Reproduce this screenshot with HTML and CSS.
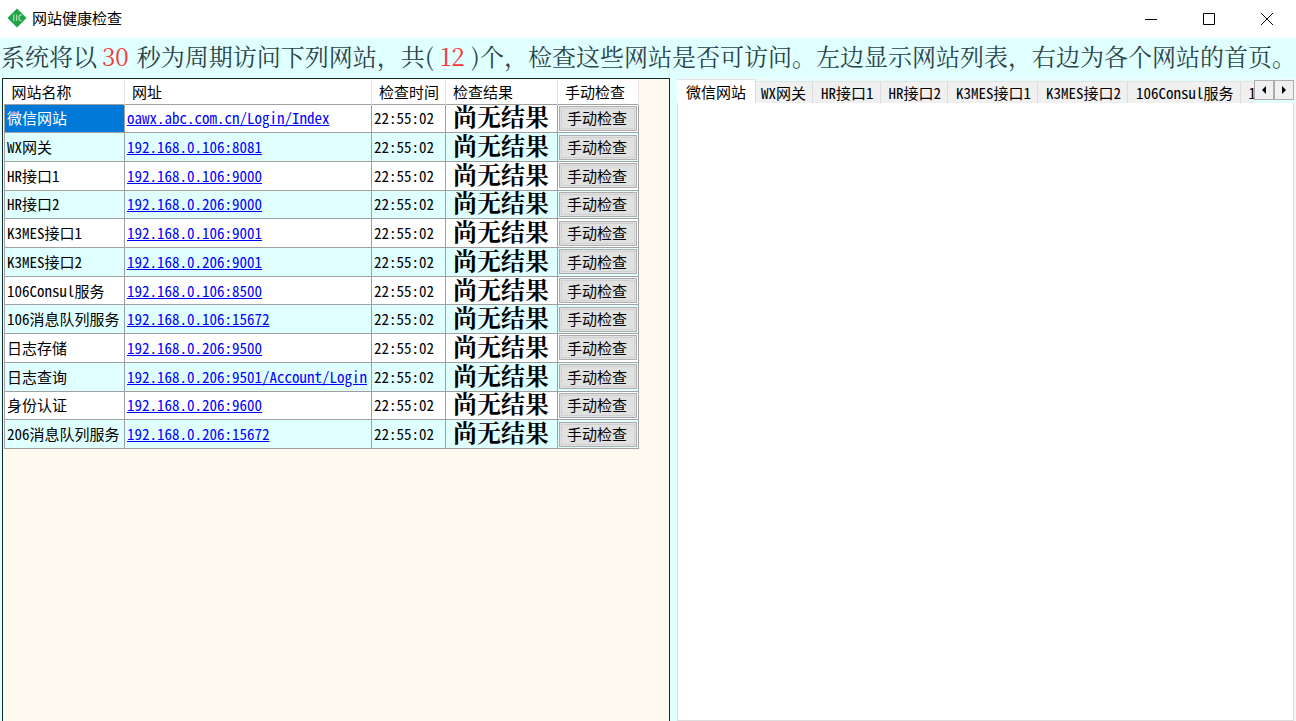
FILE: index.html
```html
<!DOCTYPE html>
<html lang="zh-CN">
<head>
<meta charset="utf-8">
<title>网站健康检查</title>
<link rel="stylesheet" href="styles.css">
</head>
<body>
<div class="window">
  <header class="titlebar">
    <svg class="logo" viewBox="0 0 20 20" aria-hidden="true">
      <path d="M10 0.5 19.5 10 10 19.5 0.5 10Z" fill="#1fa548"/>
      <path d="M6.8 6.5V13M9.6 6.5V13M14.6 7.4C12.6 6.2 12 8 12 9.8S12.8 13.2 14.6 12.2" fill="none" stroke="#a8dcae" stroke-width="1.3"/>
    </svg>
    <h1 class="title">网站健康检查</h1>
    <div class="controls">
      <button class="control" aria-label="最小化"><svg viewBox="0 0 14 14"><path d="M1 7.5H13"/></svg></button>
      <button class="control" aria-label="最大化"><svg viewBox="0 0 14 14"><path d="M1.5 1.5H12.5V12.5H1.5Z"/></svg></button>
      <button class="control" aria-label="关闭"><svg viewBox="0 0 14 14"><path d="M1 1 13 13M13 1 1 13"/></svg></button>
    </div>
  </header>
  <p class="notice"><span>系统将以</span><span class="num period">30</span><span>秒为周期访问下列网站，共</span><span class="paren">(</span><span class="num">12</span><span class="paren">)</span><span>个，检查这些网站是否可访问。左边显示网站列表，右边为各个网站的首页。</span></p>
  <main class="main">
    <section class="list">
      <table class="sites">
        <colgroup><col class="c-name"><col class="c-url"><col class="c-time"><col class="c-result"><col class="c-action"></colgroup>
        <thead><tr><th>网站名称</th><th>网址</th><th>检查时间</th><th>检查结果</th><th>手动检查</th></tr></thead>
        <tbody>
          <tr><td class="selected">微信网站</td><td><a href="#">oawx.abc.com.cn/Login/Index</a></td><td>22:55:02</td><td class="result">尚无结果</td><td class="action"><button class="check">手动检查</button></td></tr>
          <tr><td>WX网关</td><td><a href="#">192.168.0.106:8081</a></td><td>22:55:02</td><td class="result">尚无结果</td><td class="action"><button class="check">手动检查</button></td></tr>
          <tr><td>HR接口1</td><td><a href="#">192.168.0.106:9000</a></td><td>22:55:02</td><td class="result">尚无结果</td><td class="action"><button class="check">手动检查</button></td></tr>
          <tr><td>HR接口2</td><td><a href="#">192.168.0.206:9000</a></td><td>22:55:02</td><td class="result">尚无结果</td><td class="action"><button class="check">手动检查</button></td></tr>
          <tr><td>K3MES接口1</td><td><a href="#">192.168.0.106:9001</a></td><td>22:55:02</td><td class="result">尚无结果</td><td class="action"><button class="check">手动检查</button></td></tr>
          <tr><td>K3MES接口2</td><td><a href="#">192.168.0.206:9001</a></td><td>22:55:02</td><td class="result">尚无结果</td><td class="action"><button class="check">手动检查</button></td></tr>
          <tr><td>106Consul服务</td><td><a href="#">192.168.0.106:8500</a></td><td>22:55:02</td><td class="result">尚无结果</td><td class="action"><button class="check">手动检查</button></td></tr>
          <tr><td>106消息队列服务</td><td><a href="#">192.168.0.106:15672</a></td><td>22:55:02</td><td class="result">尚无结果</td><td class="action"><button class="check">手动检查</button></td></tr>
          <tr><td>日志存储</td><td><a href="#">192.168.0.206:9500</a></td><td>22:55:02</td><td class="result">尚无结果</td><td class="action"><button class="check">手动检查</button></td></tr>
          <tr><td>日志查询</td><td><a href="#">192.168.0.206:9501/Account/Login</a></td><td>22:55:02</td><td class="result">尚无结果</td><td class="action"><button class="check">手动检查</button></td></tr>
          <tr><td>身份认证</td><td><a href="#">192.168.0.206:9600</a></td><td>22:55:02</td><td class="result">尚无结果</td><td class="action"><button class="check">手动检查</button></td></tr>
          <tr><td>206消息队列服务</td><td><a href="#">192.168.0.206:15672</a></td><td>22:55:02</td><td class="result">尚无结果</td><td class="action"><button class="check">手动检查</button></td></tr>
        </tbody>
      </table>
    </section>
    <section class="pages">
      <div class="tabbar">
        <div class="tabs" role="tablist">
          <button class="tab active" role="tab" aria-selected="true">微信网站</button>
          <button class="tab next" role="tab">WX网关</button>
          <button class="tab" role="tab">HR接口1</button>
          <button class="tab" role="tab">HR接口2</button>
          <button class="tab" role="tab">K3MES接口1</button>
          <button class="tab" role="tab">K3MES接口2</button>
          <button class="tab" role="tab">106Consul服务</button>
          <button class="tab" role="tab">1</button>
        </div>
        <div class="spin">
          <button aria-label="向左"><svg viewBox="0 0 8 8"><path d="M6 0V8L2 4Z"/></svg></button>
          <button aria-label="向右"><svg viewBox="0 0 8 8"><path d="M2 0V8L6 4Z"/></svg></button>
        </div>
      </div>
      <div class="page" role="tabpanel"></div>
    </section>
  </main>
</div>
</body>
</html>
```
FILE: styles.css
```css
* { box-sizing: border-box; }

body {
  margin: 0;
  font: 15px/20px "Noto Sans Mono CJK SC", "Liberation Mono", "Noto Sans CJK SC", monospace;
  color: #000;
}

button { font: inherit; color: inherit; }

.window {
  display: flex;
  flex-direction: column;
  height: 100vh;
  overflow: hidden;
  background: #e0ffff;
}

.titlebar {
  display: flex;
  align-items: center;
  height: 38px;
  flex: none;
  padding-left: 7px;
  padding-bottom: 2px;
  background: #fff;
}
.logo { width: 20px; height: 20px; margin-right: 5px; }
.title { margin: 0; font-size: 15px; font-weight: 400; }
.controls { display: flex; margin-left: auto; }
.control {
  display: grid;
  place-items: center;
  width: 58px;
  height: 36px;
  padding: 2px 0 0;
  border: 0;
  background: none;
}
.control svg { width: 14px; height: 14px; fill: none; stroke: #000; }

.notice {
  display: flex;
  flex: none;
  height: 40px;
  margin: 0;
  padding-left: 1px;
  font: 24px/36px "Noto Serif CJK SC", "Liberation Serif", "Noto Sans CJK SC", serif;
  white-space: nowrap;
  color: #2c4348;
}
.num { margin: 0 6px; color: #f33; }
.num.period { margin: 0 8px 0 5px; }
.paren { width: 10px; text-align: center; }

.main {
  flex: 1;
  min-height: 0;
  display: grid;
  grid-template-columns: 668fr 619fr;
  gap: 7px;
  padding-left: 2px;
}

.list {
  border: 1px solid #14282c;
  border-width: 1px 1px 0;
  padding: 1px 0 0 1px;
  background: #fffaf0;
  overflow: hidden;
}

.sites {
  table-layout: fixed;
  width: 634px;
  height: 369px;
  border-collapse: collapse;
  background: #fff;
}
.c-name { width: 120px; }
.c-url { width: 247px; }
.c-time { width: 74px; }
.c-result { width: 112px; }
.c-action { width: 81px; }
.sites th {
  height: 24px;
  padding: 0 0 0 7px;
  font-weight: 400;
  text-align: left;
  white-space: nowrap;
  border-right: 1px solid #e5e5e5;
}
.sites td {
  padding: 0 2px;
  border: 1px solid #a0a0a0;
  white-space: nowrap;
}
.sites tbody tr:nth-child(even) { background: #e0ffff; }
.sites .selected { background: #0078d7; color: #fff; }
.sites a { color: #00f; text-decoration: underline; }
.sites .result {
  padding: 0 7px;
  font: bold 24px/26px "Liberation Serif", "Noto Serif CJK SC", "Noto Sans CJK SC", serif;
}
.sites .action { padding: 1px; }
.check {
  display: block;
  width: 100%;
  height: 25px;
  padding: 0 2px 0 0;
  border: 1px solid #adadad;
  outline: 1px solid #d0d0d0;
  outline-offset: -3px;
  background: #e1e1e1;
}

.pages {
  display: flex;
  flex-direction: column;
  min-width: 0;
  padding: 1px 2px 0 0;
  background: linear-gradient(#e0ffff, #e0ffff) left / 8px 100% no-repeat, #f5f7f7;
}
.tabbar { display: flex; height: 24px; background: #e0ffff; }
.tabs { display: flex; flex: 1; min-width: 0; align-items: flex-end; overflow: hidden; }
.tab {
  flex: none;
  height: 22px;
  padding: 0 6px 0 8px;
  border: 0;
  border-right: 1px solid #dcdcdc;
  border-top: 1px solid #e4e4e4;
  background: #f0f0f0;
  line-height: 18px;
}
.tab.next { padding-left: 5px; }
.tab.active { height: 24px; padding: 0 9px; background: #fff; }
.spin { display: flex; height: 20px; margin-top: 1px; }
.spin button {
  display: grid;
  place-items: center;
  width: 20px;
  padding: 0;
  border: 1px solid #adadad;
  background: #f0f0f0;
}
.spin svg { width: 8px; height: 8px; }
.page {
  flex: 1;
  border: 1px solid #dcdcdc;
  border-top: 0;
  background: #fff;
}
```
